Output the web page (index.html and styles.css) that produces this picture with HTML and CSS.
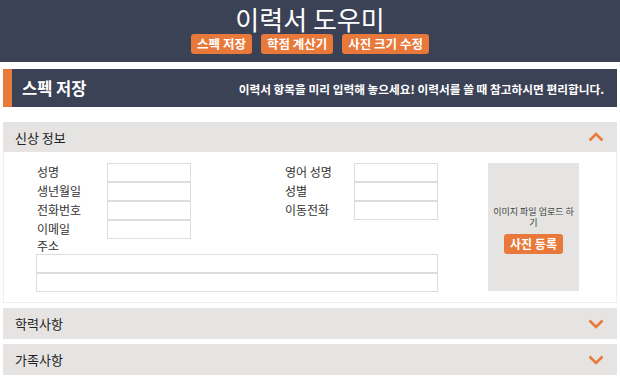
FILE: index.html
```html
<!DOCTYPE html>
<html>
<head>
	<meta charset="utf-8">
	<meta name="viewport" content="width=device-width, initial-scale=1">
	<title>이력서 도우미</title>

	<link rel="stylesheet" href="styles.css">
</head>
<body>

	<div class="top">
		<h1>이력서 도우미</h1>
		<div class="top-menu">
			<a href="#">스펙 저장</a>
			<a href="#">학점 계산기</a>
			<a href="#">사진 크기 수정</a>
		</div>
	</div>

	<div class="container">
		<div class="title-bar">
			<h2>스펙 저장</h2>
			<p>이력서 항목을 미리 입력해 놓으세요! 이력서를 쓸 때 참고하시면 편리합니다.</p>
		</div>

		<div class="section open">
			<div class="section-head">
				<span>신상 정보</span>
				<svg class="arrow" width="16" height="10" viewBox="0 0 16 10"><polyline points="1.5,8.5 8,2 14.5,8.5" fill="none" stroke="#e8793a" stroke-width="2.6"/></svg>
			</div>
			<div class="section-body">
				<div class="info">
					<div class="fields">
						<label>성명</label><input type="text">
						<span></span>
						<label>영어 성명</label><input type="text">

						<label>생년월일</label><input type="text">
						<span></span>
						<label>성별</label><input type="text">

						<label>전화번호</label><input type="text">
						<span></span>
						<label>이동전화</label><input type="text">

						<label>이메일</label><input type="text">
					</div>
					<div class="address">
						<label>주소</label>
						<input type="text">
						<input type="text">
					</div>
				</div>
				<div class="photo">
					<p>이미지 파일 업로드 하기</p>
					<button type="button">사진 등록</button>
				</div>
			</div>
		</div>

		<div class="section">
			<div class="section-head">
				<span>학력사항</span>
				<svg class="arrow" width="16" height="10" viewBox="0 0 16 10"><polyline points="1.5,1.5 8,8 14.5,1.5" fill="none" stroke="#e8793a" stroke-width="2.6"/></svg>
			</div>
		</div>

		<div class="section">
			<div class="section-head">
				<span>가족사항</span>
				<svg class="arrow" width="16" height="10" viewBox="0 0 16 10"><polyline points="1.5,1.5 8,8 14.5,1.5" fill="none" stroke="#e8793a" stroke-width="2.6"/></svg>
			</div>
		</div>
	</div>

</body>
</html>
```

FILE: styles.css
```css
*{
	margin: 0;
	padding: 0;
	box-sizing: border-box;
}
body{
	font-family: "Noto Sans CJK KR", "Noto Sans", sans-serif;
	color: #333;
	background: #fff;
}
.top{
	background: #3c4256;
	text-align: center;
	padding: 4px 0 8px;
}
.top h1{
	color: #fff;
	font-size: 26px;
	font-weight: 400;
	line-height: 30px;
}
.top-menu{
	display: flex;
	justify-content: center;
	gap: 9px;
}
.top-menu a{
	display: block;
	height: 20px;
	background: #e8793a;
	color: #fff;
	font-size: 12.5px;
	font-weight: 700;
	line-height: 20px;
	padding: 0 6px;
	border-radius: 3px;
	text-decoration: none;
}
.container{
	padding: 7px 3px 0;
}
.title-bar{
	display: flex;
	justify-content: space-between;
	align-items: center;
	height: 38px;
	background: #3c4256;
	border-left: 9px solid #e8793a;
	color: #fff;
	padding: 0 13px 0 10px;
}
.title-bar h2{
	font-size: 16.5px;
	font-weight: 700;
}
.title-bar p{
	font-size: 11.7px;
	font-weight: 700;
}
.section{
	margin-top: 5px;
}
.section.open{
	margin-top: 15px;
}
.section-head{
	display: flex;
	justify-content: space-between;
	align-items: center;
	height: 31px;
	background: #e5e4e2;
	padding: 0 13px 0 12px;
	font-size: 13px;
	color: #222;
}
.section.open .section-head{
	height: 30px;
}
.section-body{
	display: flex;
	border: 1px solid #eee;
	border-top: none;
	padding: 11px 0 10px 32px;
	height: 151px;
}
.fields{
	display: grid;
	grid-template-columns: 71px 84px 93px 70px 84px;
	grid-auto-rows: 19px;
}
.fields label,
.address label{
	font-size: 12px;
	line-height: 18px;
	padding-left: 1px;
}
input{
	border: 1px solid #ddd;
	height: 19px;
	outline: none;
}
.address{
	display: flex;
	flex-direction: column;
	width: 402px;
	margin-top: -1px;
}
.address label{
	line-height: 16px;
}
.photo{
	display: flex;
	flex-direction: column;
	align-items: center;
	justify-content: center;
	width: 91px;
	height: 128px;
	margin-left: 50px;
	background: #e5e4e2;
	padding-top: 6px;
}
.photo p{
	font-size: 9px;
	line-height: 11px;
	text-align: center;
	color: #444;
	padding: 0 4px;
}
.photo button{
	margin-top: 6px;
	background: #e8793a;
	color: #fff;
	border: none;
	border-radius: 3px;
	font-family: inherit;
	font-size: 12px;
	font-weight: 700;
	line-height: 20px;
	padding: 0 6px;
}
```
